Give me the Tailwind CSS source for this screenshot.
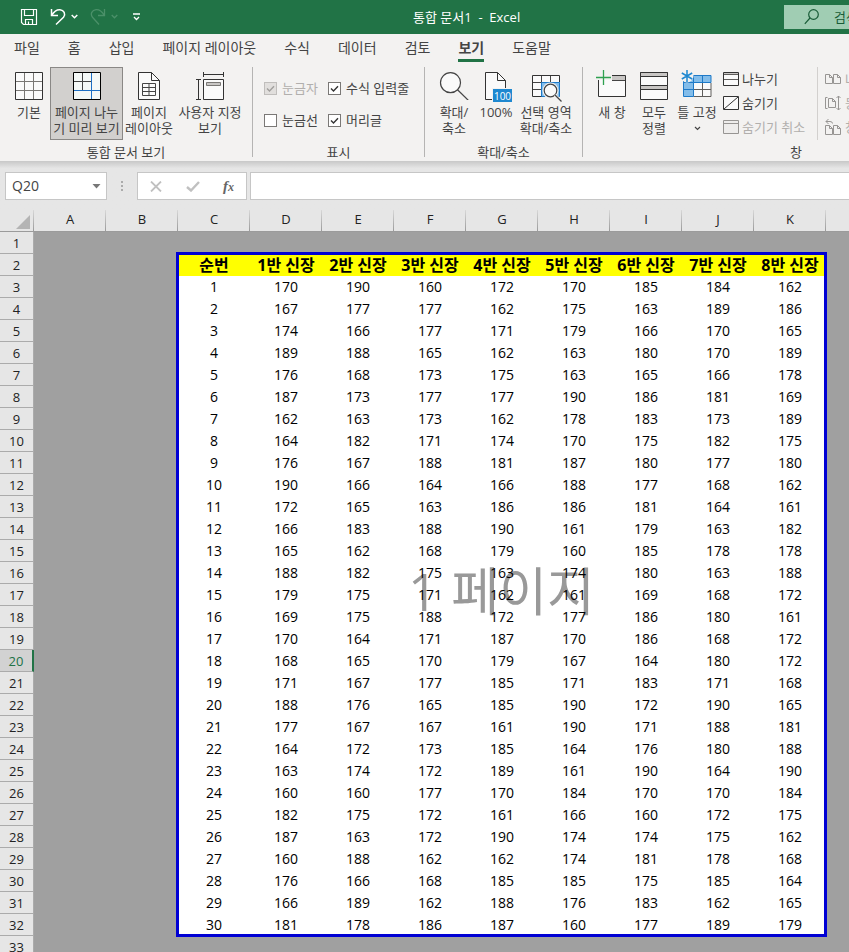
<!DOCTYPE html>
<html lang="ko">
<head>
<meta charset="utf-8">
<meta name="viewport" content="width=device-width, initial-scale=1">
<title>통합 문서1 - Excel</title>
<script src="https://cdn.jsdelivr.net/npm/@tailwindcss/browser@4"></script>
</head>
<body class="flex h-screen flex-col overflow-hidden bg-[#e6e6e6] font-['Open_Sans','Noto_Sans_CJK_KR',sans-serif] text-[13px] leading-4 text-[#444444]">

<!-- Title bar -->
<header class="flex h-[34px] shrink-0 items-center bg-[#217346] text-white">
  <div class="flex w-[413px] shrink-0 items-center pl-5">
    <button aria-label="저장"><svg width="18" height="18" viewBox="0 0 18 18" fill="none" stroke="#fff" stroke-width="1.2"><path d="M1.5 1.5h15v15h-13l-2-2zM4.500 1.500v6h9v-6M5.500 16.500v-5h7v5M8.500 16.500v-3"/></svg></button>
    <button aria-label="실행 취소" class="ml-3"><svg width="17" height="18" viewBox="0 0 17 18" fill="none" stroke="#fff" stroke-width="1.5"><path d="M1.500 1v6.500H8M1.800 7.200C4 3.500 7 1.500 10 1.700c4 .3 6 4.300 3.500 7.600L6 16.500"/></svg></button>
    <button aria-label="실행 취소 목록" class="ml-1"><svg width="7" height="6" viewBox="0 0 7 6" fill="none" stroke="#fff" stroke-width="1.500"><path d="M.7 1l2.800 2.800L6.300 1"/></svg></button>
    <button aria-label="다시 실행" class="ml-3" disabled><svg width="17" height="18" viewBox="0 0 17 18" fill="none" stroke="#4b9069" stroke-width="1.300"><path d="M14.500 1v6.500H8M14.200 7.200C12 3.500 9 1.500 6 1.700c-4 .3-6 4.300-3.500 7.600L9 16.500"/></svg></button>
    <button aria-label="다시 실행 목록" class="ml-1" disabled><svg width="7" height="6" viewBox="0 0 7 6" fill="none" stroke="#4b9069" stroke-width="1.300"><path d="M.7 1l2.800 2.800L6.300 1"/></svg></button>
    <button aria-label="빠른 실행 도구 모음 사용자 지정" class="ml-[14px]"><svg width="9" height="8" viewBox="0 0 9 8" fill="none" stroke="#fff" stroke-width="1.300"><path d="M1 1h7M2 4l2.500 2.500L7 4"/></svg></button>
  </div>
  <h1 class="whitespace-pre">통합 문서1  -  Excel</h1>
  <button class="ml-auto flex h-6 w-[65px] shrink-0 items-center gap-3 overflow-hidden bg-[#a0cdb3] pl-5 text-left whitespace-nowrap text-[#185c37]">
    <svg class="shrink-0" width="16" height="16" viewBox="0 0 16 16" fill="none" stroke="#185c37" stroke-width="1.200"><circle cx="9.500" cy="5.500" r="4.800"/><path d="M6 9L.8 14.800"/></svg>
    <span class="w-6 shrink-0 pl-[2px]">검색</span>
  </button>
</header>

<!-- Ribbon tabs -->
<nav class="flex h-7 shrink-0 gap-7 bg-[#f3f2f1] pl-[14px] text-[14px] leading-7 whitespace-nowrap" role="tablist">
  <button role="tab">파일</button>
  <button role="tab">홈</button>
  <button role="tab">삽입</button>
  <button role="tab">페이지 레이아웃</button>
  <button role="tab">수식</button>
  <button role="tab">데이터</button>
  <button role="tab">검토</button>
  <button role="tab" aria-selected="true" class="border-b-3 border-[#217346] font-bold">보기</button>
  <button role="tab">도움말</button>
</nav>

<!-- Ribbon -->
<section class="flex h-[99px] shrink-0 overflow-hidden bg-[#f3f2f1] pt-[5px] pb-1 whitespace-nowrap" aria-label="보기">
  <div class="flex w-[253px] shrink-0 flex-col border-r border-[#b5b4b3]">
    <div class="flex h-[73px] shrink-0 pl-2">
      <button class="flex w-[42px] flex-col items-center gap-1 pt-[5px]">
        <svg width="28" height="28" viewBox="0 0 28 28" fill="none"><path d="M.5.5h27v27H.5z" fill="#fafafa" stroke="#333"/><path d="M9.500 1v26M18.500 1v26M1 9.500h26M1 18.500h26" stroke="#797774"/></svg>
        <span>기본</span>
      </button>
      <button aria-pressed="true" class="flex w-[73px] flex-col items-center gap-1 border border-[#8a8886] bg-[#d2d0ce] pt-1">
        <svg width="28" height="28" viewBox="0 0 28 28" fill="none"><path d="M.5.5h27v27H.5z" fill="#f4f8f7" stroke="#000"/><path d="M9.500 1v17M1 9.500h17" stroke="#444"/><path d="M18.500 1v26M1 18.500h26" stroke="#1e6fc4"/></svg>
        <span>페이지 나누<br>기 미리 보기</span>
      </button>
      <button class="flex w-[52px] flex-col items-center gap-1 pt-[5px]">
        <svg width="22" height="28" viewBox="0 0 22 28" fill="none"><path d="M.5.500h13l8 8v19H.5z" fill="#fafafa" stroke="#333"/><path d="M13.500.500v8h8" stroke="#333"/><path d="M4.500 11.500h13v12h-13zM4.500 15.500h13M4.500 19.500h13M11 11.500v12" stroke="#444"/></svg>
        <span>페이지<br>레이아웃</span>
      </button>
      <button class="flex w-[70px] flex-col items-center gap-1 pt-[5px]">
        <svg width="28" height="28" viewBox="0 0 28 28" fill="none"><path d="M7.500 7.500h20v20h-20z" fill="#fafafa" stroke="#333"/><path d="M10.500 10.500h14v3h-14z" fill="#c8c6c4" stroke="#797774"/><path d="M7.500 0v5M27.500 0v5M8 2.500h19M0 7.500h5M0 27.500h5M2.500 8v19" stroke="#333"/></svg>
        <span>사용자 지정<br>보기</span>
      </button>
    </div>
    <h2 class="pt-1 text-center">통합 문서 보기</h2>
  </div>

  <div class="flex w-[172px] shrink-0 flex-col border-r border-[#b5b4b3]">
    <div class="grid h-[73px] shrink-0 grid-cols-[64px_1fr] content-start gap-y-4 pt-[13px] pl-[11px]">
      <label class="flex items-center gap-[5px] text-[#b1afad]"><span class="relative flex"><input type="checkbox" checked disabled class="size-[13px] appearance-none border border-[#c0bebc] bg-[#e1dfdd]"><svg class="pointer-events-none absolute inset-0" width="13" height="13" viewBox="0 0 13 13" fill="none" stroke="#a19f9d" stroke-width="1.400"><path d="M3 6.500l2.500 2.500L10 4.200"/></svg></span>눈금자</label>
      <label class="flex items-center gap-[5px]"><span class="relative flex"><input type="checkbox" checked class="size-[13px] appearance-none border border-[#7a7876] bg-white"><svg class="pointer-events-none absolute inset-0" width="13" height="13" viewBox="0 0 13 13" fill="none" stroke="#333" stroke-width="1.400"><path d="M3 6.500l2.500 2.500L10 4.200"/></svg></span>수식 입력줄</label>
      <label class="flex items-center gap-[5px]"><span class="relative flex"><input type="checkbox" class="size-[13px] appearance-none border border-[#7a7876] bg-white"></span>눈금선</label>
      <label class="flex items-center gap-[5px]"><span class="relative flex"><input type="checkbox" checked class="size-[13px] appearance-none border border-[#7a7876] bg-white"><svg class="pointer-events-none absolute inset-0" width="13" height="13" viewBox="0 0 13 13" fill="none" stroke="#333" stroke-width="1.400"><path d="M3 6.500l2.500 2.500L10 4.200"/></svg></span>머리글</label>
    </div>
    <h2 class="pt-1 text-center">표시</h2>
  </div>

  <div class="flex w-[158px] shrink-0 flex-col border-r border-[#b5b4b3]">
    <div class="flex h-[73px] shrink-0 pl-2">
      <button class="flex w-[42px] flex-col items-center gap-1 pt-[5px]">
        <svg width="30" height="28" viewBox="0 0 30 28" fill="none" stroke="#444" stroke-width="1.200"><circle cx="11.500" cy="10.700" r="10" fill="#fafafa"/><path d="M18.500 17.800L29.500 28.500"/></svg>
        <span>확대/<br>축소</span>
      </button>
      <button class="flex w-[42px] flex-col items-center gap-1 pt-[5px]">
        <svg class="overflow-visible" width="22" height="28" viewBox="0 0 22 28" fill="none"><path d="M.5.500h12l8 8v19H.5z" fill="#fafafa" stroke="#333"/><path d="M12.500.500v8h8" stroke="#333"/><path d="M7 16h20v14H7z" fill="#f3f2f1"/><path d="M8 17h19v13H8z" fill="#1e88d0"/><text x="17.500" y="27.500" text-anchor="middle" font-size="10" fill="#fff">100</text></svg>
        <span>100%</span>
      </button>
      <button class="flex w-[58px] flex-col items-center gap-1 pt-[5px]">
        <svg class="overflow-visible" width="28" height="28" viewBox="0 0 28 28" fill="none"><path d="M.5 3.500h27v21H.5z" fill="#fafafa" stroke="#333"/><path d="M10 10h18v15H10z" fill="#83bdea"/><path d="M9.500 4v20M18.500 4v6M1 10.500h26M1 17.500h9" stroke="#444"/><path d="M9.500 10.500h18v14h-18z" stroke="#1e7ac8"/><circle cx="18.500" cy="18.500" r="8" fill="#f3f2f1"/><circle cx="18.500" cy="18.500" r="6.300" fill="#fafafa" stroke="#444" stroke-width="1.200"/><path d="M23 23l6.500 6.500" stroke="#f3f2f1" stroke-width="3"/><path d="M23 23l6.500 6.500" stroke="#444" stroke-width="1.200"/></svg>
        <span>선택 영역<br>확대/축소</span>
      </button>
    </div>
    <h2 class="pt-1 text-center">확대/축소</h2>
  </div>

  <div class="flex w-[426px] shrink-0 flex-col">
    <div class="flex h-[73px] shrink-0 pl-2">
      <button class="flex w-[42px] flex-col items-center gap-1 pt-[5px]">
        <svg class="overflow-visible" width="28" height="28" viewBox="0 0 28 28" fill="none"><path d="M.5 3.500h27v21H.5z" fill="#fafafa" stroke="#333"/><path d="M14 4h13v4H14z" fill="#c8c6c4"/><path d="M14 8.500h13" stroke="#444"/><path d="M-1 0h15v8H-1z" fill="#f3f2f1"/><path d="M1 8h13v3H1z" fill="#fafafa"/><path d="M5.500-2v15M-2 5.500h15" stroke="#2ea04f" stroke-width="1.300"/></svg>
        <span>새 창</span>
      </button>
      <button class="flex w-[42px] flex-col items-center gap-1 pt-[5px]">
        <svg width="28" height="28" viewBox="0 0 28 28" fill="none" stroke="#333"><path d="M.5.500h27v27H.5z" fill="#fafafa"/><path d="M.5.500h27v4H.5zM.5 13.500h27v4H.5z" fill="#c8c6c4"/></svg>
        <span>모두<br>정렬</span>
      </button>
      <button class="flex w-[44px] flex-col items-center gap-1 pt-[5px]">
        <svg class="overflow-visible" width="28" height="28" viewBox="0 0 28 28" fill="none"><path d="M1 4h27v20H1z" fill="#fafafa"/><path d="M1 3h27v8H10v14H1z" fill="#83bdea"/><path d="M10.500 17.500H28M19.500 11v13M10.500 24.500h17.500V11" stroke="#605e5c"/><path d="M.500 3.500h27.500v7H10.500v14H.5zM10.500 3.500v7H.5M19.500 3.500v7M.5 17.500h10" stroke="#1e7ac8"/><circle cx="4" cy="4" r="6.500" fill="#f3f2f1"/><path d="M4-2v12M-1.200 1l10.400 6M-1.200 7L9.200 1" stroke="#1e88d0" stroke-width="1.500"/></svg>
        <span>틀 고정</span>
        <svg class="mt-[2px]" width="7" height="5" viewBox="0 0 7 5" fill="none" stroke="#444" stroke-width="1.200"><path d="M1 1l2.500 2.500L6 1"/></svg>
      </button>
      <div class="flex w-[99px] flex-col gap-2 border-r border-[#d2d0ce] pt-1 pl-1">
        <button class="flex items-center gap-[3px]"><svg width="16" height="14" viewBox="0 0 16 14" fill="none" stroke="#333"><path d="M.5.500h15v13H.5z" fill="#fafafa"/><path d="M1 1h14v1H1z" fill="#c8c6c4" stroke="none"/><path d="M1 2.500h14M1 7.500h14" stroke="#605e5c"/></svg>나누기</button>
        <button class="flex items-center gap-[3px]"><svg width="16" height="14" viewBox="0 0 16 14" fill="none" stroke="#333"><path d="M.5.500h15v13H.5zM1 13L15 1" fill="#fafafa"/></svg>숨기기</button>
        <button class="flex items-center gap-[3px] text-[#b1afad]" disabled><svg width="16" height="14" viewBox="0 0 16 14" fill="none" stroke="#979593"><path d="M.5.500h15v13H.5zM1 3.500h14" fill="#eeedec"/></svg>숨기기 취소</button>
      </div>
      <div class="flex flex-col gap-2 pt-1 pl-[7px] text-[#b1afad]">
        <button class="flex items-center gap-1" disabled><svg width="16" height="14" viewBox="0 0 16 14" fill="none" stroke="#979593"><path d="M.5 2.500h4l3 3v6h-7zM4.500 2.500v3h3M8.500 2.500h4l3 3v6h-7zM12.500 2.500v3h3"/></svg>나란히 보기</button>
        <button class="flex items-center gap-1" disabled><svg width="16" height="16" viewBox="0 0 16 16" fill="none" stroke="#979593"><path d="M2.500 2.500h-2v11h2M3.500 3.500h4l3 3v6h-7zM7.500 3.500v3h3M13.500 1v14M11.500 3l2-2 2 2M11.500 13l2 2 2-2"/></svg>동시 스크롤</button>
        <button class="flex items-center gap-1" disabled><svg width="16" height="16" viewBox="0 0 16 16" fill="none" stroke="#979593"><path d="M.5 6.500h4l3 3v6h-7zM4.500 6.500v3h3M8.500 6.500h4l3 3v6h-7zM12.500 6.500v3h3M3.500 0l-2.500 2.500L3.500 5M1 2.500h4q2.500 0 2.500 2"/></svg>창 위치 다시 정렬</button>
      </div>
    </div>
    <h2 class="pt-1 text-center">창</h2>
  </div>
</section>

<!-- Formula bar -->
<section class="flex h-[49px] shrink-0 bg-linear-to-b from-[#c8c8c8] to-[#e6e6e6] to-15% pt-[11px] pb-[10px] pl-[5px]" aria-label="수식 입력줄">
  <div class="flex w-[102px] shrink-0 items-center border border-[#c6c6c6] bg-white pr-[5px]">
    <input aria-label="이름 상자" value="Q20" class="w-full min-w-0 bg-transparent pl-[6px] text-[14px] outline-none">
    <button aria-label="이름 목록"><svg width="9" height="5" viewBox="0 0 9 5"><path d="M.5 0h8l-4 4.500z" fill="#777"/></svg></button>
  </div>
  <svg class="mx-[14px] shrink-0 self-center" width="2" height="12" viewBox="0 0 2 12" fill="#ababab"><path d="M0 1h2v2H0zM0 5h2v2H0zM0 9h2v2H0z"/></svg>
  <div class="flex w-[110px] shrink-0 items-center justify-between border border-[#c6c6c6] bg-white pr-3 pl-3">
    <button aria-label="취소" disabled><svg width="12" height="11" viewBox="0 0 12 11" fill="none" stroke="#c0c0c0" stroke-width="1.800"><path d="M1 .5l10 10M11 .5l-10 10"/></svg></button>
    <button aria-label="입력" disabled><svg width="14" height="11" viewBox="0 0 14 11" fill="none" stroke="#c0c0c0" stroke-width="2.400"><path d="M1 6l4 3.500L13 1"/></svg></button>
    <button aria-label="함수 삽입" class="font-['Liberation_Serif',serif] text-[15px] font-bold text-[#666666] italic">f<span class="text-[12px]">x</span></button>
  </div>
  <input aria-label="수식" class="ml-[3px] min-w-0 flex-1 border border-r-0 border-[#c6c6c6] bg-white px-2 outline-none">
</section>

<!-- Worksheet -->
<main class="relative flex-1 overflow-hidden bg-[#a0a0a0]">
  <div class="absolute top-[42px] left-[176px] flex h-[685px] w-[651px] items-center justify-center bg-white pb-2 text-[52px] leading-none text-[#999999]">1 페이지</div>
  <table class="relative w-full table-fixed border-separate border-spacing-0 text-center">
    <colgroup>
      <col class="w-[34px]"><col span="11" class="w-[72px]"><col>
    </colgroup>
    <thead>
      <tr id="letters" class="h-[22px] bg-[#e6e6e6] text-[#222222]">
        <td class="border-b border-[#9b9b9b] bg-linear-to-b from-[#d8d8d8] to-[#9b9b9b] bg-[length:1px_100%] bg-right bg-no-repeat p-0"><svg class="mt-[3px] ml-auto mr-1" width="14" height="14" viewBox="0 0 14 14"><path d="M14 0v14H0z" fill="#b4b4b4"/></svg></td>
      </tr>
    </thead>
    <tbody id="rows"></tbody>
  </table>
  <div class="pointer-events-none absolute top-[42px] left-[176px] h-[685px] w-[651px] border-3 border-[#0000d4]"></div>
</main>

<script>
const data = `
170 190 160 172 170 185 184 162
167 177 177 162 175 163 189 186
174 166 177 171 179 166 170 165
189 188 165 162 163 180 170 189
176 168 173 175 163 165 166 178
187 173 177 177 190 186 181 169
162 163 173 162 178 183 173 189
164 182 171 174 170 175 182 175
176 167 188 181 187 180 177 180
190 166 164 166 188 177 168 162
172 165 163 186 186 181 164 161
166 183 188 190 161 179 163 182
165 162 168 179 160 185 178 178
188 182 175 163 174 180 163 188
179 175 171 162 161 169 168 172
169 175 188 172 177 186 180 161
170 164 171 187 170 186 168 172
168 165 170 179 167 164 180 172
171 167 177 185 171 183 171 168
188 176 165 185 190 172 190 165
177 167 167 161 190 171 188 181
164 172 173 185 164 176 180 188
163 174 172 189 161 190 164 190
160 160 177 170 184 170 170 184
182 175 172 161 166 160 172 175
187 163 172 190 174 174 175 162
160 188 162 162 174 181 178 168
176 166 168 185 185 175 185 164
166 189 162 188 176 183 162 165
181 178 186 187 160 177 189 179`.trim().split('\n').map(line => line.split(' '));

// Column letters, then the strip of the next column
const letterClass = "border-b border-[#9b9b9b] bg-linear-to-b from-[#d8d8d8] to-[#9b9b9b] bg-[length:1px_100%] bg-right bg-no-repeat p-0 pb-1 font-normal";
document.getElementById('letters').insertAdjacentHTML('beforeend',
  [...'ABCDEFGHIJK'].map(l => `<th scope="col" class="${letterClass}">${l}</th>`).join('') +
  '<td class="border-b border-[#9b9b9b] p-0"></td>');

const heads = ['순번', ...Array.from({ length: 8 }, (_, i) => `${i + 1}반 신장`)];
let html = '';
for (let r = 1; r <= 33; r++) {
  const rowHead = r === 20
    ? "h-[22px] border-r-2 border-b border-r-[#217346] border-b-[#ababab] bg-[#d2d2d2] p-0 font-normal text-[#217346]"
    : "h-[22px] border-r border-b border-[#ababab] bg-[#e6e6e6] p-0 font-normal text-[#222222]";
  html += `<tr><th scope="row" class="${rowHead}">${r}</th><td class="p-0"></td><td class="p-0"></td>`;
  if (r === 2) {
    html += heads.map(h => `<td class="bg-[#ffff00] p-0 text-[16px] leading-5 font-bold whitespace-nowrap text-black">${h}</td>`).join('');
  } else if (r > 2 && r < 33) {
    html += [r - 2, ...data[r - 3]].map(v => `<td class="p-0 text-[14px] text-black">${v}</td>`).join('');
  } else {
    html += '<td class="p-0"></td>'.repeat(9);
  }
  html += '<td class="p-0"></td></tr>';
}
document.getElementById('rows').innerHTML = html;
</script>
</body>
</html>
